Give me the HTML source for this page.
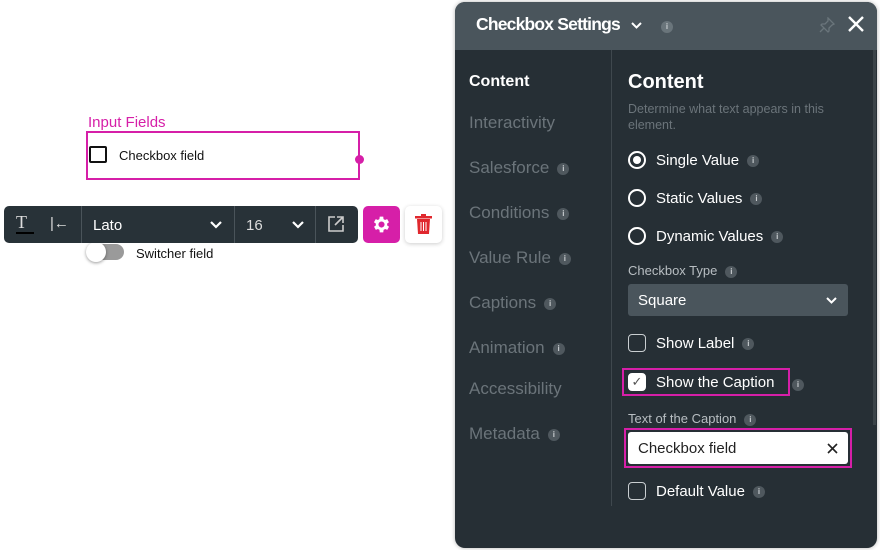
<!DOCTYPE html>
<html><head><style>
*{box-sizing:border-box;margin:0;padding:0}
body{width:880px;height:550px;background:#fff;font-family:"Liberation Sans",sans-serif;position:relative;overflow:hidden}
.a{position:absolute}
.info{display:inline-block;width:12px;height:12px;border-radius:50%;background:#4f585e;color:#c8cdd0;font-size:8px;line-height:12px;text-align:center;font-weight:bold;vertical-align:middle;margin-left:8px}
.nav{position:absolute;left:469px;color:#6b747a;font-size:17px}
.opt{position:absolute;left:628px;color:#fff;font-size:15px}
.radio{position:absolute;left:628px;width:18px;height:18px;border:2px solid #fff;border-radius:50%}
.cb{position:absolute;left:628px;width:18px;height:18px;border:1.5px solid #c9ced1;border-radius:4px}
</style></head><body>
<div class="a" style="left:88px;top:114px;color:#d61fa8;font-size:15px">Input Fields</div>
<div class="a" style="left:86px;top:131px;width:274px;height:49px;border:2px solid #d61fa8"></div>
<div class="a" style="left:355px;top:155px;width:9px;height:9px;border-radius:50%;background:#d61fa8"></div>
<div class="a" style="left:89px;top:146px;width:18px;height:17px;border:2px solid #111;border-radius:2px"></div>
<div class="a" style="left:119px;top:148px;font-size:13px;color:#111">Checkbox field</div>
<div class="a" style="left:87px;top:244px;width:37px;height:16px;border-radius:8px;background:#9a9a9a"></div>
<div class="a" style="left:86px;top:242px;width:20px;height:20px;border-radius:50%;background:#fff;box-shadow:0 1px 3px rgba(0,0,0,.4)"></div>
<div class="a" style="left:136px;top:246px;font-size:13px;color:#111">Switcher field</div>
<div class="a" style="left:4px;top:206px;width:354px;height:37px;background:#283238;border-radius:5px;color:#fff"></div>
<div class="a" style="left:16px;top:212px;color:#ddd;font-size:18px;font-family:'Liberation Serif',serif">T</div>
<div class="a" style="left:16px;top:232px;width:18px;height:2px;background:#000"></div>
<div class="a" style="left:50px;top:215px;color:#ddd;font-size:15px">|←</div>
<div class="a" style="left:81px;top:206px;width:1px;height:37px;background:#4a545a"></div>
<div class="a" style="left:93px;top:217px;color:#fff;font-size:15px">Lato</div>
<svg class="a" style="left:210px;top:221px" width="12" height="8" viewBox="0 0 12 8"><path d="M1 1l5 5 5-5" stroke="#fff" stroke-width="2.2" fill="none"/></svg>
<div class="a" style="left:234px;top:206px;width:1px;height:37px;background:#4a545a"></div>
<div class="a" style="left:246px;top:217px;color:#ddd;font-size:15px">16</div>
<svg class="a" style="left:292px;top:221px" width="12" height="8" viewBox="0 0 12 8"><path d="M1 1l5 5 5-5" stroke="#fff" stroke-width="2.2" fill="none"/></svg>
<div class="a" style="left:315px;top:206px;width:1px;height:37px;background:#4a545a"></div>
<svg class="a" style="left:327px;top:215px" width="18" height="18" viewBox="0 0 18 18" fill="none" stroke="#ccc" stroke-width="1.6"><path d="M8 2H2v14h14v-6M10 2h6v6M16 2L8 10"/></svg>
<div class="a" style="left:363px;top:206px;width:37px;height:37px;background:#d61fa8;border-radius:5px"></div>
<svg class="a" style="left:371px;top:214px" width="21" height="21" viewBox="0 0 24 24"><path fill="#fff" d="M19.4 13a7.5 7.5 0 000-2l2.1-1.6-2-3.5-2.5 1a7.6 7.6 0 00-1.7-1L15 3h-4l-.4 2.9a7.6 7.6 0 00-1.7 1l-2.5-1-2 3.5L6.6 11a7.5 7.5 0 000 2l-2.1 1.6 2 3.5 2.5-1a7.6 7.6 0 001.7 1L11 21h4l.4-2.9a7.6 7.6 0 001.7-1l2.5 1 2-3.5zM13 15.5a3.5 3.5 0 110-7 3.5 3.5 0 010 7z" transform="translate(-1 0)"/></svg>
<div class="a" style="left:405px;top:206px;width:37px;height:37px;background:#fff;border-radius:5px;box-shadow:0 1px 4px rgba(0,0,0,.2)"></div>
<svg class="a" style="left:415px;top:214px" width="17" height="20" viewBox="0 0 17 20"><rect x="0" y="2" width="17" height="2.5" fill="#e0282e"/><rect x="6" y="0" width="5" height="2" fill="#e0282e"/><path d="M2 5h13l-1 15H3z" fill="#e0282e"/><path d="M6 8v9M8.5 8v9M11 8v9" stroke="#fff" stroke-width="1"/></svg>

<div class="a" style="left:455px;top:2px;width:422px;height:546px;background:#262f35;border-radius:10px;overflow:hidden;box-shadow:0 0 4px rgba(0,0,0,.3)">
<div style="height:48px;background:#4a555c"></div>
</div>
<div class="a" style="left:476px;top:14px;color:#fff;font-size:17.5px;font-weight:bold;letter-spacing:-.8px">Checkbox Settings</div>
<svg class="a" style="left:631px;top:22px" width="11" height="7" viewBox="0 0 11 7"><path d="M1 1l4.5 4.5L10 1" stroke="#fff" stroke-width="2" fill="none"/></svg>
<div class="a" style="left:661px;top:18px"><span class="info" style="background:#6a757b;margin:0">i</span></div>
<svg class="a" style="left:819px;top:17px" width="16" height="16" viewBox="0 0 16 16"><path d="M9 1l6 6-2 1-3 3v3l-1 1-7-7 1-1h3l3-3z M5 11l-4 4" stroke="#6a757b" stroke-width="1.3" fill="none"/></svg>
<svg class="a" style="left:848px;top:16px" width="16" height="16" viewBox="0 0 16 16"><path d="M1 1l14 14M15 1L1 15" stroke="#fff" stroke-width="2.4"/></svg>
<div class="a" style="left:611px;top:50px;width:1px;height:456px;background:#3f484e"></div>
<div class="a" style="left:873px;top:50px;width:3px;height:375px;background:#3a4348"></div>
<div class="nav" style="top:73px;color:#fff;font-weight:bold;font-size:16px">Content</div>
<div class="nav" style="top:113px">Interactivity</div>
<div class="nav" style="top:158px">Salesforce<span class="info">i</span></div>
<div class="nav" style="top:203px">Conditions<span class="info">i</span></div>
<div class="nav" style="top:248px">Value Rule<span class="info">i</span></div>
<div class="nav" style="top:293px">Captions<span class="info">i</span></div>
<div class="nav" style="top:338px">Animation<span class="info">i</span></div>
<div class="nav" style="top:379px">Accessibility</div>
<div class="nav" style="top:424px">Metadata<span class="info">i</span></div>

<div class="a" style="left:628px;top:71px;color:#fff;font-size:20px;font-weight:bold">Content</div>
<div class="a" style="left:628px;top:101px;color:#6b747a;font-size:12.5px;line-height:16px;width:215px">Determine what text appears in this element.</div>
<div class="radio" style="top:151px"><div style="width:8px;height:8px;background:#fff;border-radius:50%;margin:3px"></div></div>
<div class="opt" style="left:656px;top:152px">Single Value<span class="info">i</span></div>
<div class="radio" style="top:189px"></div>
<div class="opt" style="left:656px;top:190px">Static Values<span class="info">i</span></div>
<div class="radio" style="top:227px"></div>
<div class="opt" style="left:656px;top:228px">Dynamic Values<span class="info">i</span></div>
<div class="a" style="left:628px;top:263px;color:#b8bec2;font-size:13px">Checkbox Type<span class="info">i</span></div>
<div class="a" style="left:628px;top:284px;width:220px;height:32px;background:#4a555c;border-radius:3px;color:#fff;font-size:15px;padding:8px 10px">Square</div>
<svg class="a" style="left:826px;top:297px" width="11" height="7" viewBox="0 0 11 7"><path d="M1 1l4.5 4.5L10 1" stroke="#fff" stroke-width="2" fill="none"/></svg>
<div class="cb" style="top:334px"></div>
<div class="opt" style="left:656px;top:335px">Show Label<span class="info">i</span></div>
<div class="a" style="left:622px;top:368px;width:168px;height:28px;border:2px solid #d61fa8"></div>
<div class="cb" style="top:373px;background:#fff;border-color:#fff;color:#555;font-size:13px;line-height:16px;text-align:center">✓</div>
<div class="opt" style="left:656px;top:374px">Show the Caption</div>
<div class="a" style="left:792px;top:376px"><span class="info" style="margin:0">i</span></div>
<div class="a" style="left:628px;top:411px;color:#b8bec2;font-size:13px">Text of the Caption<span class="info">i</span></div>
<div class="a" style="left:624px;top:428px;width:228px;height:40px;border:2px solid #d61fa8"></div>
<div class="a" style="left:628px;top:432px;width:220px;height:32px;background:#fff;border-radius:3px;color:#222;font-size:15px;padding:8px 10px">Checkbox field</div>
<svg class="a" style="left:827px;top:443px" width="11" height="11" viewBox="0 0 11 11"><path d="M1 1l9 9M10 1l-9 9" stroke="#222" stroke-width="1.6"/></svg>
<div class="cb" style="top:482px"></div>
<div class="opt" style="left:656px;top:483px">Default Value<span class="info">i</span></div>
</body></html>
